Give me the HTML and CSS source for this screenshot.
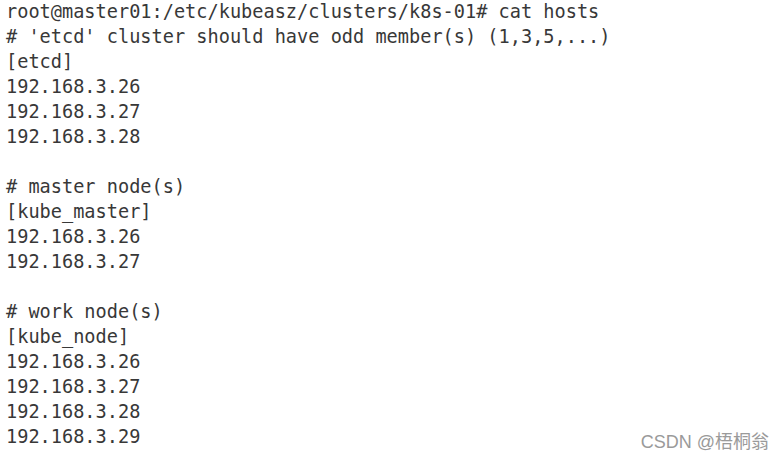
FILE: index.html
```html
<!DOCTYPE html>
<html>
<head>
<meta charset="utf-8">
<link rel="stylesheet" href="styles.css">
</head>
<body>
<div class="screen">
<pre class="term">root@master01:/etc/kubeasz/clusters/k8s-01# cat hosts
# 'etcd' cluster should have odd member(s) (1,3,5,...)
[etcd]
192.168.3.26
192.168.3.27
192.168.3.28

# master node(s)
[kube_master]
192.168.3.26
192.168.3.27

# work node(s)
[kube_node]
192.168.3.26
192.168.3.27
192.168.3.28
192.168.3.29</pre>
<div class="mark">CSDN @梧桐翁</div>
</div>
</body>
</html>
```

FILE: styles.css
```css
html, body {
  margin: 0;
  padding: 0;
  background: #ffffff;
}
.screen {
  position: relative;
  width: 784px;
  height: 459px;
  overflow: hidden;
}
.term {
  margin: -1px 0 0 0;
  padding: 0 0 0 6px;
  font-family: "DejaVu Sans Mono", monospace;
  font-size: 18.6px;
  line-height: 25px;
  color: #383838;
}
.mark {
  position: absolute;
  right: 15px;
  bottom: 6px;
  font-family: "Liberation Sans", "Noto Sans CJK SC", sans-serif;
  font-size: 18px;
  color: #9a9a9a;
}
```
